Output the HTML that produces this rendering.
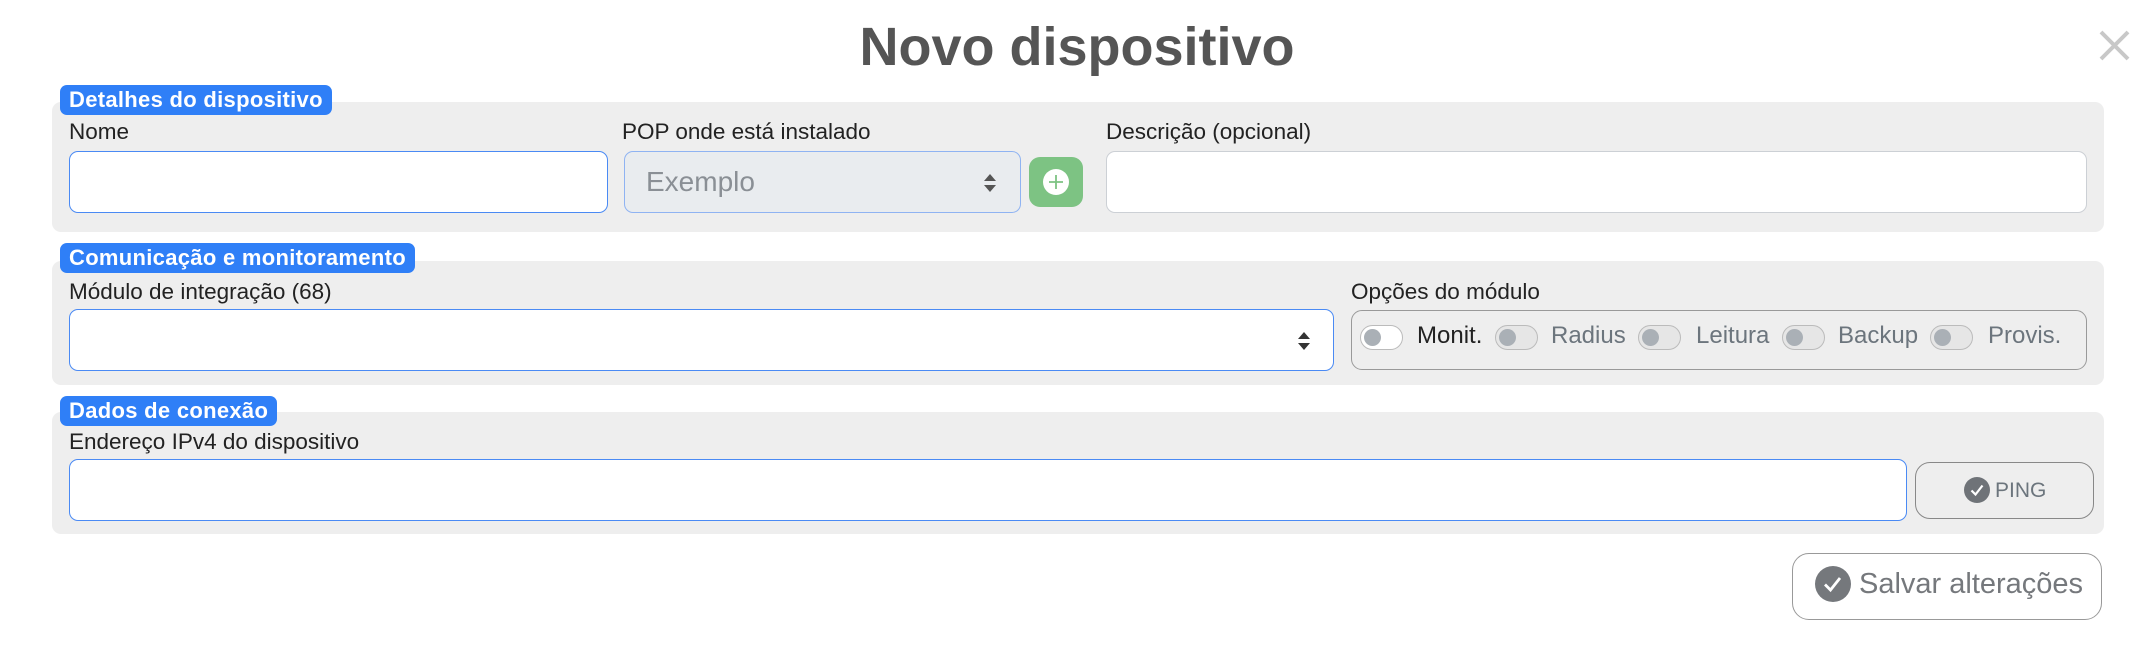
<!DOCTYPE html>
<html><head><meta charset="utf-8"><style>
*{box-sizing:border-box;margin:0;padding:0}
body{width:2154px;height:672px;background:#fff;font-family:"Liberation Sans",Arial,sans-serif;position:relative;overflow:hidden;color:#222}
.a{position:absolute}
.title{left:0;width:2154px;top:16px;text-align:center;font-size:54px;font-weight:bold;color:#555}
.panel{background:#eeeeee;border-radius:9px;left:52px;width:2052px}
.badge{background:#2f7ff7;color:#fff;font-weight:bold;font-size:22px;border-radius:7px;padding:0 9px;height:30px;line-height:30px;left:60px;letter-spacing:0.3px}
.lbl{font-size:22.5px;color:#222}
.inp{background:#fff;border:1.5px solid #4a8af4;border-radius:9px;height:62px}
.tog{width:43px;height:25px;border:1.5px solid #bbb;border-radius:13px;background:#e6e6e6}
.tog::after{content:"";position:absolute;left:3px;top:3px;width:17px;height:17px;border-radius:50%;background:#aab0b6}
.tog.w{background:#fff}
.opt{font-size:24px;color:#6c757d;top:322px}
</style></head><body>
<div class="a title">Novo dispositivo</div>
<svg class="a" style="left:2098px;top:30px" width="33" height="31" viewBox="0 0 33 31"><path d="M3 2 L30 29 M30 2 L3 29" stroke="#c8c8c8" stroke-width="4"/></svg>

<div class="a panel" style="top:102px;height:130px"></div>
<div class="a badge" style="top:85px">Detalhes do dispositivo</div>
<div class="a lbl" style="left:69px;top:119px">Nome</div>
<div class="a inp" style="left:69px;top:151px;width:539px"></div>
<div class="a lbl" style="left:622px;top:119px">POP onde está instalado</div>
<div class="a inp" style="left:624px;top:151px;width:397px;background:#e9ecef;border-color:#8fb3f2"></div>
<div class="a" style="left:646px;top:166px;font-size:28px;color:#8a8f95">Exemplo</div>
<svg class="a" style="left:983px;top:172px" width="14" height="22" viewBox="0 0 14 22"><path d="M7 2 L13 9 H1Z M7 20 L13 13 H1Z" fill="#555"/></svg>
<div class="a" style="left:1029px;top:157px;width:54px;height:50px;border-radius:11px;background:#7dc383"></div>
<div class="a" style="left:1043px;top:169px;width:26px;height:26px;border-radius:50%;background:#fff"></div>
<svg class="a" style="left:1043px;top:169px" width="26" height="26"><path d="M13 6V20M6 13H20" stroke="#7dc383" stroke-width="1.8"/></svg>
<div class="a lbl" style="left:1106px;top:119px">Descrição (opcional)</div>
<div class="a inp" style="left:1106px;top:151px;width:981px;border-color:#ccd0d5"></div>

<div class="a panel" style="top:261px;height:124px"></div>
<div class="a badge" style="top:243px">Comunicação e monitoramento</div>
<div class="a lbl" style="left:69px;top:279px">Módulo de integração (68)</div>
<div class="a inp" style="left:69px;top:309px;width:1265px"></div>
<svg class="a" style="left:1297px;top:330px" width="14" height="22" viewBox="0 0 14 22"><path d="M7 2 L13 9 H1Z M7 20 L13 13 H1Z" fill="#333"/></svg>
<div class="a lbl" style="left:1351px;top:279px">Opções do módulo</div>
<div class="a" style="left:1351px;top:310px;width:736px;height:60px;border:1.5px solid #999;border-radius:11px"></div>
<div class="a tog w" style="left:1360px;top:325px"></div>
<div class="a opt" style="left:1417px;color:#222">Monit.</div>
<div class="a tog" style="left:1495px;top:325px"></div>
<div class="a opt" style="left:1551px">Radius</div>
<div class="a tog" style="left:1638px;top:325px"></div>
<div class="a opt" style="left:1696px">Leitura</div>
<div class="a tog" style="left:1782px;top:325px"></div>
<div class="a opt" style="left:1838px">Backup</div>
<div class="a tog" style="left:1930px;top:325px"></div>
<div class="a opt" style="left:1988px">Provis.</div>

<div class="a panel" style="top:412px;height:122px"></div>
<div class="a badge" style="top:396px">Dados de conexão</div>
<div class="a lbl" style="left:69px;top:429px">Endereço IPv4 do dispositivo</div>
<div class="a inp" style="left:69px;top:459px;width:1838px"></div>
<div class="a" style="left:1915px;top:462px;width:179px;height:57px;border:1.5px solid #888;border-radius:15px"></div>
<svg class="a" style="left:1964px;top:477px" width="26" height="26"><circle cx="13" cy="13" r="13" fill="#6f7378"/><path d="M7.5 13.5 L11.5 17.5 L18.5 8.5" stroke="#fff" stroke-width="2.2" fill="none"/></svg>
<div class="a" style="left:1995px;top:479px;font-size:21px;color:#6c757d">PING</div>

<div class="a" style="left:1792px;top:553px;width:310px;height:67px;border:1.5px solid #999;border-radius:17px"></div>
<svg class="a" style="left:1815px;top:566px" width="36" height="36"><circle cx="18" cy="18" r="18" fill="#75787c"/><path d="M10 18.5 L15.5 24 L25 12" stroke="#fff" stroke-width="2.8" fill="none"/></svg>
<div class="a" style="left:1859px;top:568px;font-size:29px;color:#75787c">Salvar alterações</div>
</body></html>
